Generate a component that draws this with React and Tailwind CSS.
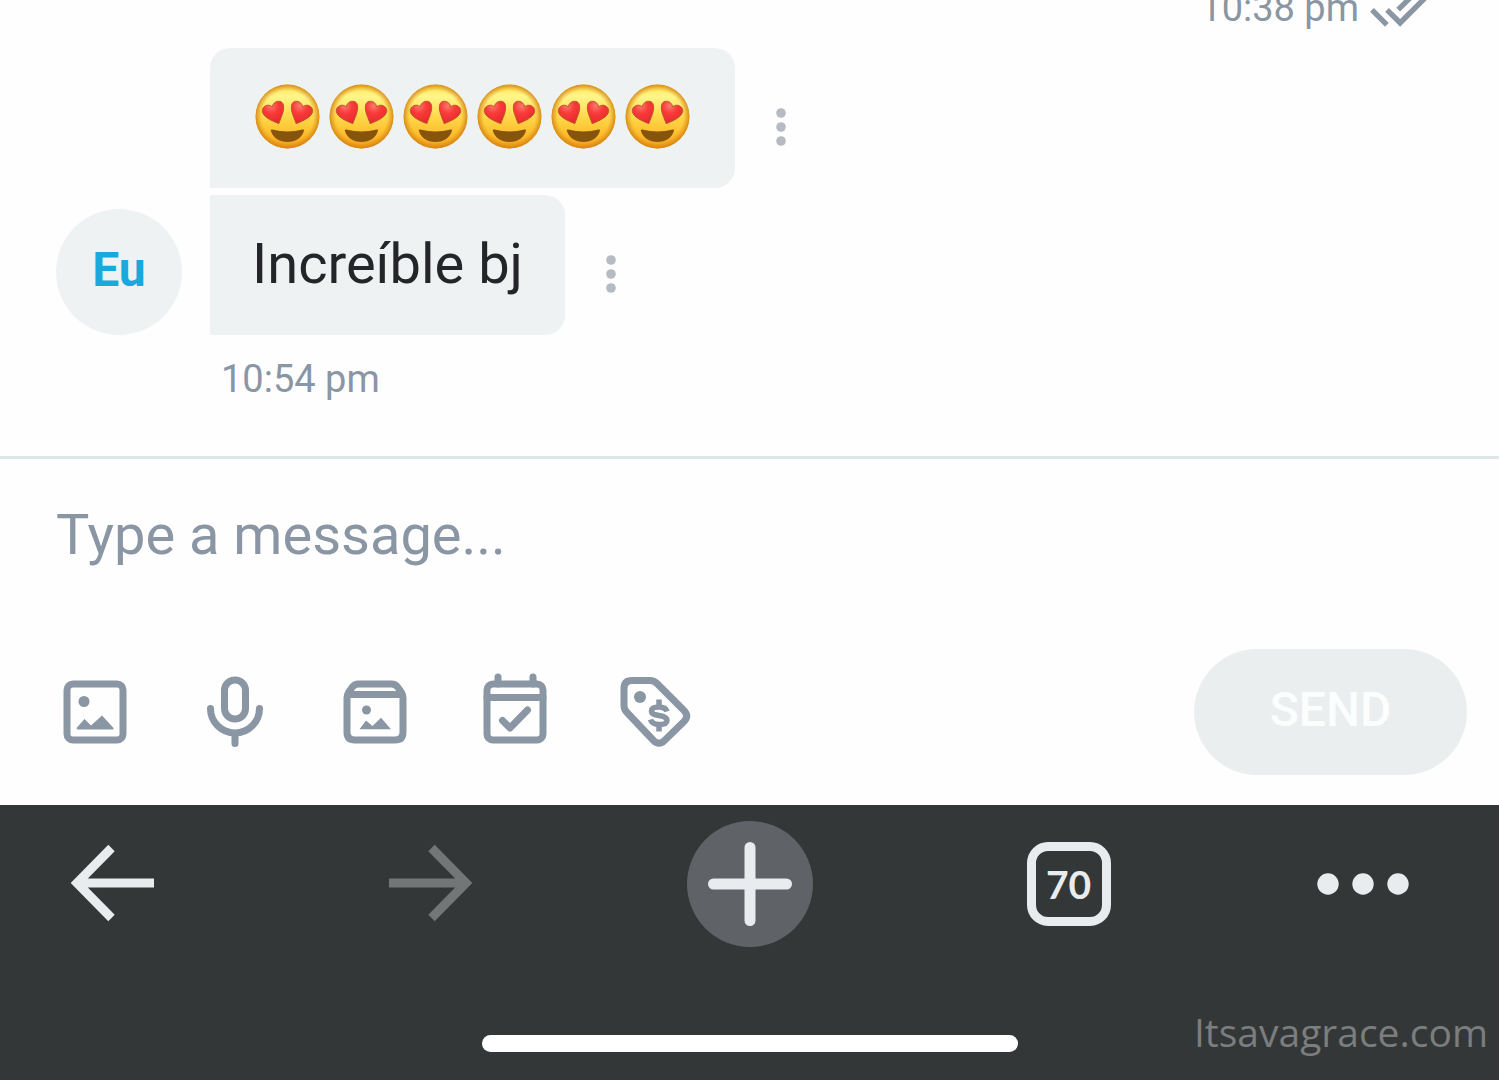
import React from "react";

function HeartEyes() {
  return (
    <svg viewBox="0 0 64 64" className="size-[65px] shrink-0" aria-hidden="true">
      <defs>
        <linearGradient id="face" x1="0" y1="0" x2="0" y2="1">
          <stop offset="0" stopColor="#fbe14e" />
          <stop offset="0.18" stopColor="#fff68a" />
          <stop offset="0.5" stopColor="#ffd94a" />
          <stop offset="0.8" stopColor="#fcbb2a" />
          <stop offset="1" stopColor="#f2a01a" />
        </linearGradient>
        <radialGradient id="rim" cx="0.5" cy="0.5" r="0.5">
          <stop offset="0.8" stopColor="#e08a10" stopOpacity="0" />
          <stop offset="1" stopColor="#cf7d14" stopOpacity="0.85" />
        </radialGradient>
        <radialGradient id="heart" cx="0.4" cy="0.2" r="0.8">
          <stop offset="0" stopColor="#fb7a70" />
          <stop offset="0.45" stopColor="#f93a38" />
          <stop offset="1" stopColor="#e52a2c" />
        </radialGradient>
      </defs>
      <circle cx="32" cy="32" r="31.500" fill="url(#face)" />
      <circle cx="32" cy="32" r="31.500" fill="url(#rim)" />
      <g fill="url(#heart)" stroke="#b8502a" strokeWidth="0.9">
        <path d="M23.500 39C17 36.500 8 32.500 7.200 27C6.700 21.500 13.500 19 17 22.500C18 16.500 26 15 27.800 20C29.500 26 25.500 33 23.500 39Z" />
        <path d="M40.500 39C38.500 33 34.500 26 36.200 20C38 15 46 16.500 47 22.500C50.500 19 57.300 21.500 56.800 27C56 32.500 47 36.500 40.500 39Z" />
      </g>
      <path
        d="M15.500 45.500Q15.500 44.500 17 44.800Q32 48.500 47 44.800Q48.500 44.500 48.300 45.500C46.500 53 40 57 32 57S17.300 53 15.500 45.500Z"
        fill="#86540c"
      />
    </svg>
  );
}

function MoreButton() {
  return (
    <button type="button" aria-label="Message options" className="ml-[41px] mt-[18px]">
      <svg viewBox="0 0 10 38" className="h-[38px] w-[10px]" fill="#b6bbc3">
        <circle cx="5" cy="5" r="4.800" />
        <circle cx="5" cy="19" r="4.800" />
        <circle cx="5" cy="33" r="4.800" />
      </svg>
    </button>
  );
}

function ToolButton({ label, children }) {
  return (
    <button type="button" aria-label={label} className="size-[84px] shrink-0">
      <svg
        viewBox="0 0 84 84"
        className="size-full"
        fill="none"
        stroke="#8a96a3"
        strokeWidth="7"
        strokeLinecap="round"
        strokeLinejoin="round"
      >
        {children}
      </svg>
    </button>
  );
}

function Messages() {
  return (
    <main className="flex min-h-0 flex-1 flex-col justify-end overflow-hidden pb-[53px]">
      <div className="mb-4 flex shrink-0 items-center justify-end gap-[10px] pr-[66px] text-[#8a96a3]">
        <time className="text-[38px] leading-[48px]">10:38 pm</time>
        <svg viewBox="0 0 24 24" className="-my-2 size-16" fill="currentColor" role="img" aria-label="Read">
          <path d="M18 7l-1.410-1.410-6.340 6.340 1.410 1.410L18 7zm4.240-1.410L11.660 16.170 7.480 12l-1.410 1.410L11.660 19l12-12-1.420-1.410zM.41 13.410L6 19l1.410-1.410L1.830 12 .41 13.410z" />
        </svg>
      </div>
      <div className="flex shrink-0 items-end gap-7 pl-14">
        <div className="flex size-[126px] shrink-0 items-center justify-center rounded-full bg-[#eff2f3] pb-1 text-[48px] leading-none font-bold text-[#1aa9dc]">
          Eu
        </div>
        <div className="flex flex-col items-start gap-[7px]">
          <div className="flex items-center">
            <div
              role="img"
              aria-label="Six smiling faces with heart eyes"
              className="flex h-[140px] items-center gap-[9px] rounded-[20px] rounded-bl-none bg-[#eff2f3] pr-[45px] pb-1 pl-[45px]"
            >
              {[0, 1, 2, 3, 4, 5].map((i) => (
                <HeartEyes key={i} />
              ))}
            </div>
            <MoreButton />
          </div>
          <div className="flex items-center">
            <p className="rounded-r-[20px] bg-[#eff2f3] px-[42px] pt-[35px] pb-[37px] text-[56px] leading-[68px] text-[#242529]">
              Increíble bj
            </p>
            <MoreButton />
          </div>
        </div>
      </div>
      <time className="mt-5 ml-[221px] shrink-0 text-[38px] leading-[48px] text-[#8a96a3]">10:54 pm</time>
    </main>
  );
}

function Composer() {
  return (
    <form
      className="shrink-0 border-t-[3px] border-[#dfe6e8] pt-11 pb-[30px]"
      onSubmit={(e) => e.preventDefault()}
    >
      <input
        type="text"
        aria-label="Message"
        placeholder="Type a message..."
        className="block h-16 w-full bg-transparent px-14 text-[56px] leading-[64px] text-[#242529] outline-none placeholder:text-[#8a96a3] placeholder:opacity-100"
      />
      <div className="mt-[82px] flex items-center justify-between pr-8 pl-[53px]">
        <div className="flex gap-14">
          <ToolButton label="Add image">
            <rect x="14" y="14" width="56" height="56" rx="6" />
            <g fill="#8a96a3" stroke="none">
              <circle cx="31" cy="31.500" r="5.500" />
              <path d="M24.500 59.500Q23 59 24 57.500L31.500 49L38 55.500L49 45.500L60.500 58Q61 59.500 59.500 59.500Z" />
            </g>
          </ToolButton>
          <ToolButton label="Record voice">
            <rect x="31.500" y="10" width="21" height="39" rx="10.500" />
            <path d="M17.500 38.500a24.500 24.500 0 0 0 49 0M42 64V73.500" />
          </ToolButton>
          <ToolButton label="Add from vault">
            <path d="M14 28Q14 25 15.500 22.500L19 17.500Q21.500 14 25.500 14H58.500Q62.500 14 65 17.500L68.500 22.500Q70 25 70 28V62Q70 70 62 70H22Q14 70 14 62ZM16 24.500H68" />
            <g fill="#8a96a3" stroke="none">
              <circle cx="33.500" cy="40" r="4.500" />
              <path d="M26.500 59.300L33 50.500L39.500 56L48 47.700L58 59.300Z" />
            </g>
          </ToolButton>
          <ToolButton label="Schedule">
            <rect x="14" y="14" width="56" height="56" rx="6" />
            <path d="M14 27.500H70M25 7V14M60 7V14M29.500 50.500L37 58L54.500 40" />
          </ToolButton>
          <ToolButton label="Set price">
            <path d="M19 10.500H37Q41 10.500 44 13.500L71 40.500Q76.500 46 71 51.500L51.500 70.500Q46 76 40.500 70.500L14 42.500Q11 39.500 11 35.500V18.500Q11 10.500 19 10.500Z" />
            <circle cx="27" cy="27" r="6" fill="#8a96a3" stroke="none" />
            <path
              strokeWidth="5.500"
              strokeLinecap="butt"
              d="M54 41.500Q52.500 37 46 37C41 37 38.500 38.500 38.500 41C38.500 44 41 44.700 46 45.500S54 47.500 54 50.500C54 53.500 51.500 54.500 46 54.500Q39 54.500 37.500 49.500M46 29.500V37M46 54.500V61.500"
            />
          </ToolButton>
        </div>
        <button
          type="submit"
          disabled
          className="h-[126px] w-[273px] rounded-full bg-[#ebeeef] pb-1 text-[48px] leading-none font-medium text-[#fcfdfd]"
        >
          SEND
        </button>
      </div>
    </form>
  );
}

function BrowserBar() {
  return (
    <nav className="relative shrink-0 bg-[#343738] pt-4 pb-7 text-[#e8ecee]">
      <div className="grid grid-cols-[1fr_auto_1fr] items-center">
        <div className="flex items-center justify-between pr-[214px] pl-[70px]">
          <button type="button" aria-label="Back">
            <svg viewBox="0 0 84 84" className="size-[84px]" fill="none" stroke="currentColor" strokeWidth="9">
              <path d="M84 41H8M41.500 6L7 41L41.500 76" />
            </svg>
          </button>
          <button type="button" aria-label="Forward" className="text-[#727677]">
            <svg viewBox="0 0 84 84" className="size-[84px]" fill="none" stroke="currentColor" strokeWidth="9">
              <path d="M0 41H76M42.500 6L77 41L42.500 76" />
            </svg>
          </button>
        </div>
        <button
          type="button"
          aria-label="New tab"
          className="flex size-[126px] items-center justify-center rounded-full bg-[#5f6367]"
        >
          <svg viewBox="0 0 84 84" className="size-[84px]" stroke="currentColor" strokeWidth="11" strokeLinecap="round">
            <path d="M5.500 42H78.500M42 5.500V78.500" />
          </svg>
        </button>
        <div className="flex items-center justify-between pr-[90px] pl-[214px]">
          <button
            type="button"
            aria-label="Open tabs, 70"
            className="flex size-[84px] items-center justify-center rounded-[21px] border-[9px] border-current font-['Lato',sans-serif] text-[39px] leading-none font-bold"
          >
            70
          </button>
          <button type="button" aria-label="More">
            <svg viewBox="0 0 92 22" className="h-[22px] w-[92px]" fill="currentColor">
              <circle cx="11" cy="11" r="10.700" />
              <circle cx="46" cy="11" r="10.700" />
              <circle cx="81" cy="11" r="10.700" />
            </svg>
          </button>
        </div>
      </div>
      <div className="mx-auto mt-[88px] h-[17px] w-[536px] rounded-full bg-white" />
      <span className="absolute right-[11px] bottom-[20px] font-['Open_Sans',sans-serif] text-[39px] leading-[56px] text-[#7b7d7e]">
        Itsavagrace.com
      </span>
    </nav>
  );
}

export default function App() {
  return (
    <div className="flex h-screen flex-col bg-[#fefefe] font-['Roboto',sans-serif]">
      <Messages />
      <Composer />
      <BrowserBar />
    </div>
  );
}
